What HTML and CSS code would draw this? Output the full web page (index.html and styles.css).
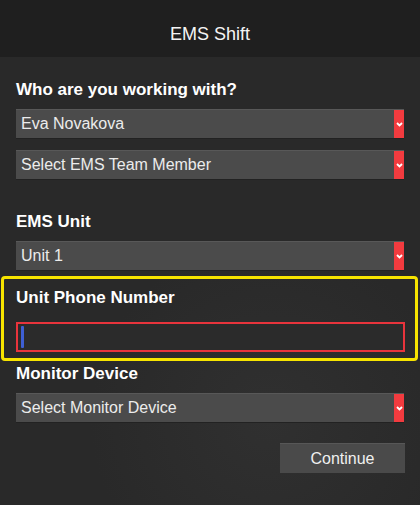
FILE: index.html
```html
<!DOCTYPE html>
<html lang="en">
<head>
  <meta charset="UTF-8">
  <meta name="viewport" content="width=device-width, initial-scale=1.0">
  <title>EMS Shift</title>
  <link rel="stylesheet" href="styles.css">
</head>
<body>
  <header class="top-bar">EMS Shift</header>

  <main class="shift-form">
    <div class="field-label first">Who are you working with?</div>
    <div class="picker">
      <span class="picker-text">Eva Novakova</span>
      <span class="picker-arrow"><svg width="7" height="5" viewBox="0 0 7 5"><polyline points="1,1 3.5,3.5 6,1" fill="none" stroke="#fff" stroke-width="1.8"/></svg></span>
    </div>
    <div class="picker spaced">
      <span class="picker-text">Select EMS Team Member</span>
      <span class="picker-arrow"><svg width="7" height="5" viewBox="0 0 7 5"><polyline points="1,1 3.5,3.5 6,1" fill="none" stroke="#fff" stroke-width="1.8"/></svg></span>
    </div>

    <div class="field-label unit">EMS Unit</div>
    <div class="picker">
      <span class="picker-text">Unit 1</span>
      <span class="picker-arrow"><svg width="7" height="5" viewBox="0 0 7 5"><polyline points="1,1 3.5,3.5 6,1" fill="none" stroke="#fff" stroke-width="1.8"/></svg></span>
    </div>

    <section class="highlight">
      <div class="field-label">Unit Phone Number</div>
      <div class="phone-input"><span class="caret"></span></div>
    </section>

    <div class="field-label monitor">Monitor Device</div>
    <div class="picker">
      <span class="picker-text">Select Monitor Device</span>
      <span class="picker-arrow"><svg width="7" height="5" viewBox="0 0 7 5"><polyline points="1,1 3.5,3.5 6,1" fill="none" stroke="#fff" stroke-width="1.8"/></svg></span>
    </div>

    <div class="actions">
      <button class="continue-btn">Continue</button>
    </div>
  </main>
</body>
</html>
```

FILE: styles.css
```css
body {
  margin: 0;
  padding: 0;
  font-family: 'Liberation Sans', Arial, sans-serif;
  color: #fff;
  background: #292929;
  background-image: radial-gradient(circle at 270px 420px, #303030 0, #292929 180px);
  min-height: 505px;
  overflow: hidden;
}

.top-bar {
  height: 57px;
  background: #1f1f1f;
  display: flex;
  align-items: center;
  justify-content: center;
  font-size: 18px;
  padding-top: 12px;
  box-sizing: border-box;
  color: #f4f4f4;
}

.shift-form {
  padding: 0 16px;
}

.field-label {
  font-size: 17px;
  line-height: 20px;
  font-weight: bold;
  margin-bottom: 9px;
}
.field-label.first { padding-top: 23px; }
.field-label.unit { margin-top: 33px; }
.field-label.monitor { margin-top: 3px; }

/* fake select boxes */
.picker {
  display: flex;
  height: 29px;
  background: #4b4b4b;
  border-top: 1px solid #585858;
  box-sizing: border-box;
  box-shadow: 0 1px 0 #222;
}
.picker.spaced { margin-top: 12px; }

.picker-text {
  flex: 1;
  padding-left: 5px;
  font-size: 16px;
  line-height: 28px;
  color: #ececec;
}

.picker-arrow {
  width: 10px;
  background: #f23b3f;
  display: flex;
  align-items: center;
  justify-content: center;
}

.highlight {
  margin: 6px -14px 0 -15px;
  padding: 9px 10px 6px 12px;
  border: 3px solid #f7e400;
  border-radius: 4px;
}

.highlight .field-label { margin-bottom: 14px; }

.phone-input {
  height: 30px;
  border: 2px solid #e8343c;
  box-sizing: border-box;
  background: #2b2b2b;
  padding: 2px 3px;
}

.caret {
  display: block;
  width: 3px;
  height: 22px;
  background: #3e5fd4;
  border-radius: 1px;
}

.actions {
  display: flex;
  justify-content: flex-end;
  margin-top: 21px;
  margin-right: -1px;
}

.continue-btn {
  width: 125px;
  height: 30px;
  background: #4a4a4a;
  border: none;
  border-top: 1px solid #575757;
  color: #f0f0f0;
  font-family: 'Liberation Sans', Arial, sans-serif;
  font-size: 16px;
  cursor: pointer;
}
```
